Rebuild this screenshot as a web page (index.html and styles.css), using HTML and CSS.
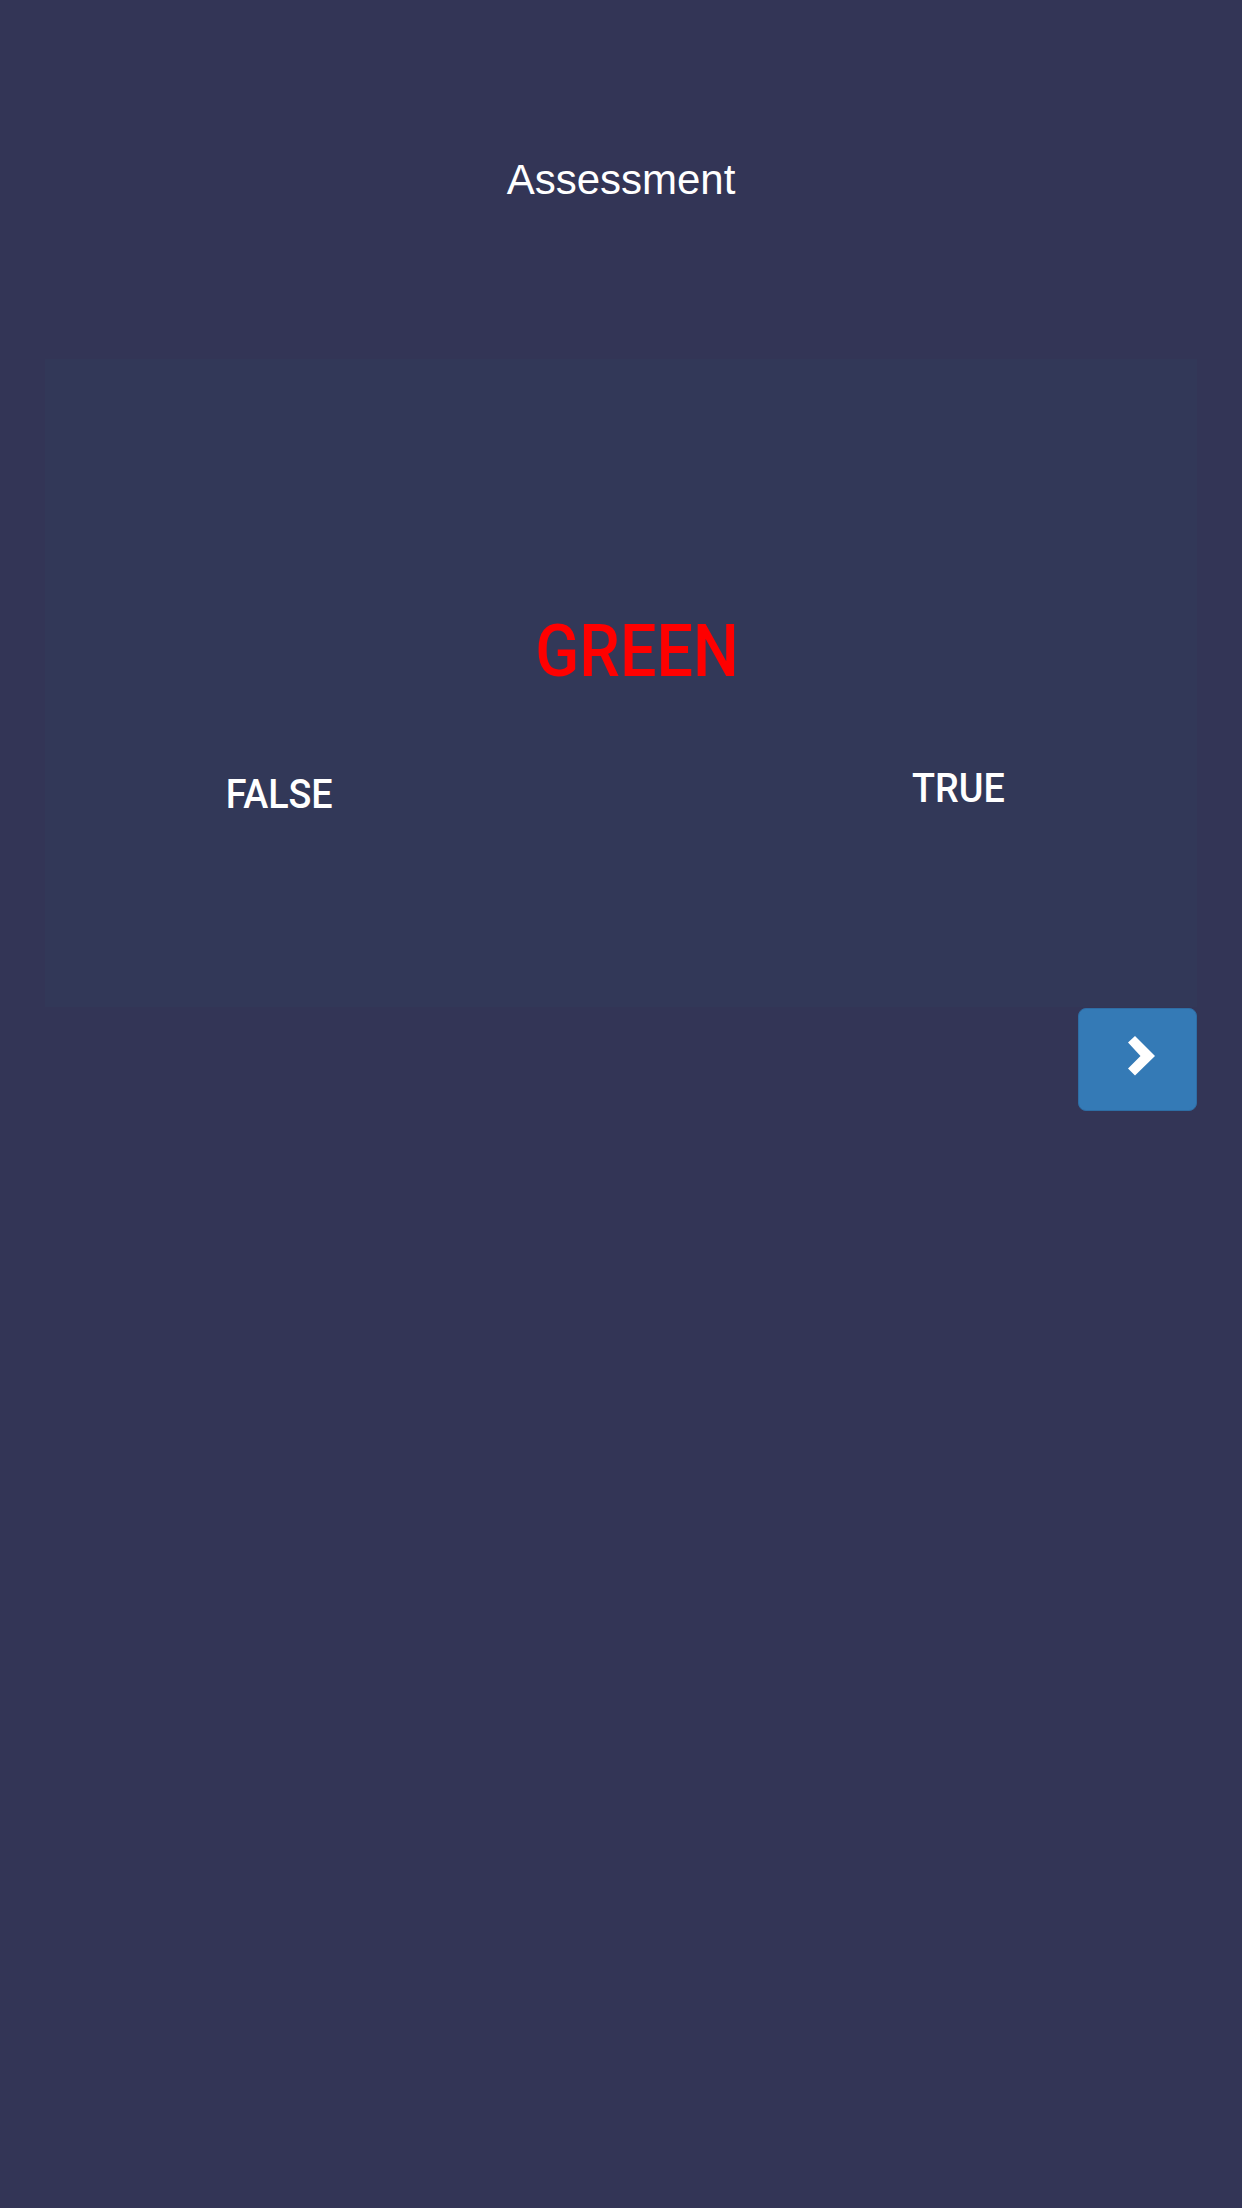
FILE: index.html
```html
<!DOCTYPE html>
<html lang="en">
<head>
<meta charset="utf-8">
<title>Assessment</title>
<link rel="stylesheet" href="styles.css">
</head>
<body>
<div class="page">
  <header class="header">
    <h1 class="title">Assessment</h1>
  </header>
  <main class="card">
    <div class="word-row">
      <span class="word">GREEN</span>
    </div>
    <div class="answers">
      <span class="answer answer-false">FALSE</span>
      <span class="answer answer-true">TRUE</span>
    </div>
  </main>
  <div class="actions">
    <button class="next-btn" type="button" aria-label="Next">
      <svg class="chevron" width="28" height="40" viewBox="49 28 28 40" aria-hidden="true">
        <polygon points="50,34.5 57,28 77,48 57,67.5 50,60.5 62.5,48" fill="#ffffff"/>
      </svg>
    </button>
  </div>
</div>
</body>
</html>
```

FILE: styles.css
```css
html, body {
  margin: 0;
  padding: 0;
  background: #333556;
}

body {
  width: 1242px;
  min-height: 2208px;
  font-family: "Liberation Sans", Arial, sans-serif;
  color: #ffffff;
}

.page {
  display: flex;
  flex-direction: column;
}

.header {
  padding-top: 156px;
  display: flex;
  justify-content: center;
}

.title {
  margin: 0;
  font-family: "Liberation Sans", Arial, sans-serif;
  font-weight: normal;
  font-size: 42px;
  line-height: 48px;
  color: #ffffff;
}

.card {
  margin: 155px 0 0 45px;
  width: 1152px;
  height: 648px;
  box-sizing: border-box;
  background: #323858;
  padding-top: 249px;
  font-family: Roboto, "Noto Sans", sans-serif;
}

.word-row {
  display: flex;
  justify-content: center;
  padding-left: 32px;
  height: 86px;
}

.word {
  display: inline-block;
  font-size: 73px;
  font-weight: 500;
  line-height: 86px;
  color: #ff0000;
  transform: scaleX(0.885);
  transform-origin: center;
}

.answers {
  display: flex;
  justify-content: space-between;
  align-items: flex-start;
  padding: 0 188px 0 176px;
  margin-top: 70px;
}

.answer {
  display: inline-block;
  font-size: 41px;
  font-weight: 500;
  line-height: 48px;
  color: #ffffff;
  transform: scaleX(0.92);
  transform-origin: center;
}

.answer-false {
  margin-top: 6px;
}

.actions {
  display: flex;
  justify-content: flex-end;
  width: 1197px;
  margin-top: 1px;
}

.next-btn {
  width: 119px;
  height: 103px;
  box-sizing: border-box;
  padding: 0 0 7px 7px;
  background: #347ab6;
  border: 1px solid #2e6da4;
  border-radius: 8px;
  display: flex;
  align-items: center;
  justify-content: center;
  cursor: pointer;
}

.chevron {
  display: block;
}
```
